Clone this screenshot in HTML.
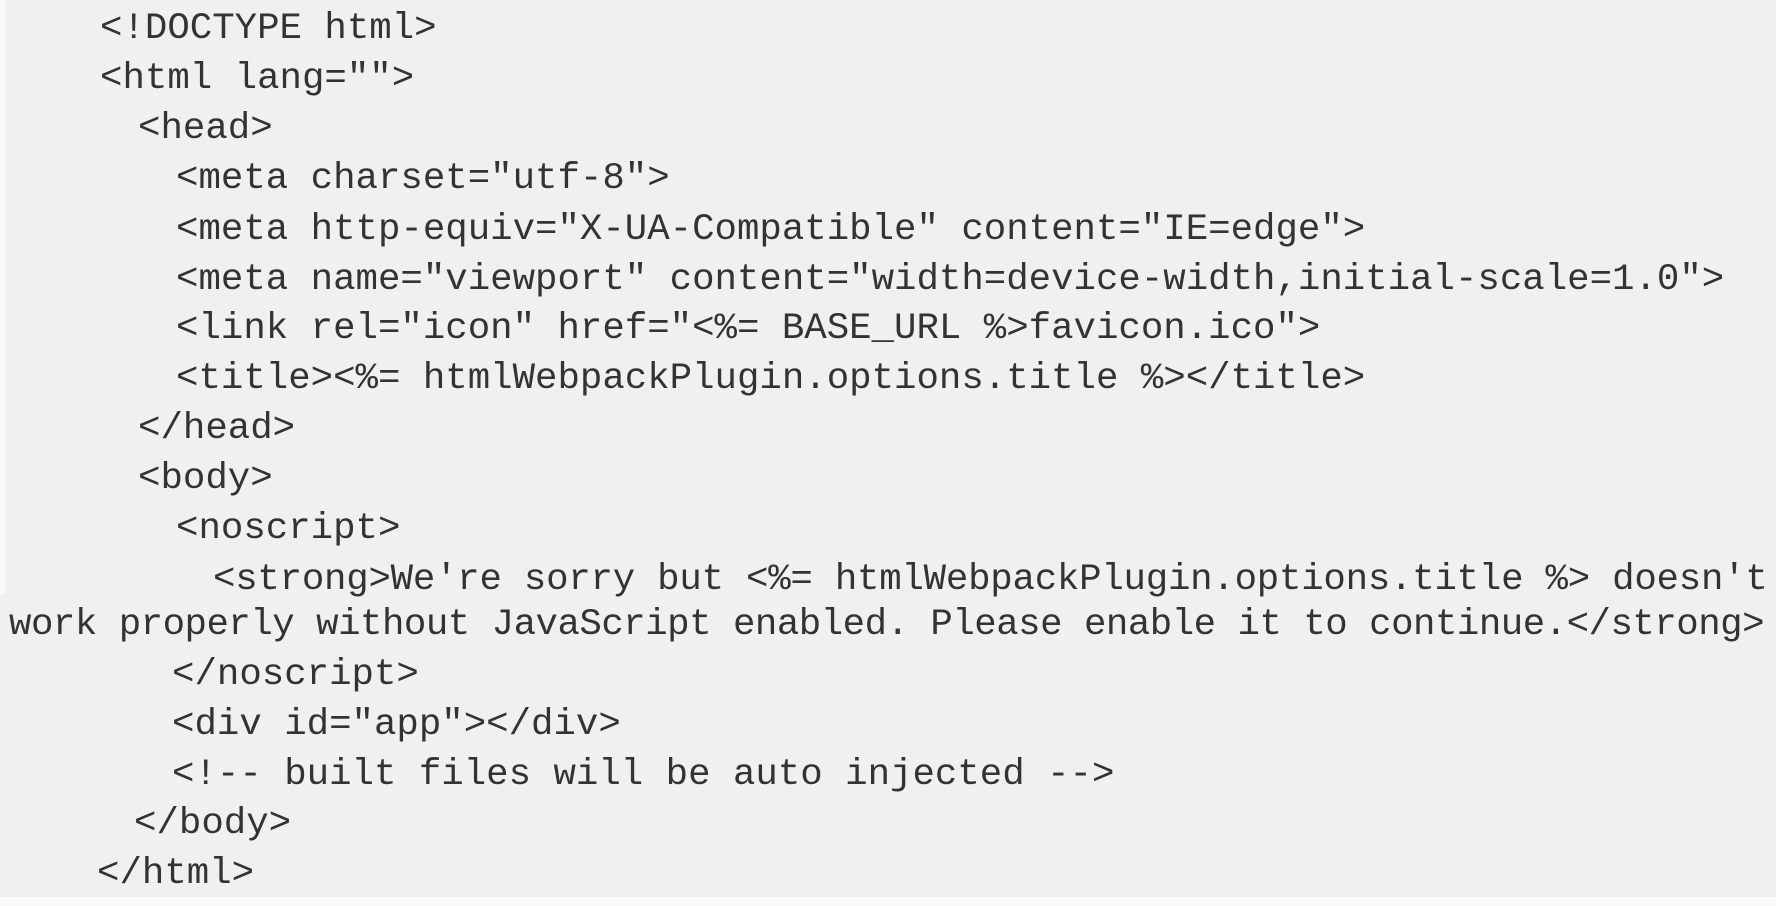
<!DOCTYPE html>
<html><head><meta charset="utf-8"><style>
html,body{margin:0;padding:0}
body{width:1776px;height:906px;background:#f0f0f0;position:relative;overflow:hidden;font-family:"Liberation Mono",monospace;font-size:37.4px;color:#333}
.l{position:absolute;white-space:pre;line-height:50px;height:50px;margin-top:2px}
.edge{position:absolute;left:0;top:0;width:5px;height:595px;background:#fafafa}
.bot{position:absolute;left:0;top:897px;width:1776px;height:9px;background:#fafafa}
</style></head><body>
<div class="edge"></div><div class="bot"></div>
<div class="l" style="left:100px;top:2px">&lt;!DOCTYPE html&gt;</div>
<div class="l" style="left:100px;top:52px">&lt;html lang=""&gt;</div>
<div class="l" style="left:138px;top:102px">&lt;head&gt;</div>
<div class="l" style="left:176px;top:152px">&lt;meta charset="utf-8"&gt;</div>
<div class="l" style="left:176px;top:203px">&lt;meta http-equiv="X-UA-Compatible" content="IE=edge"&gt;</div>
<div class="l" style="left:176px;top:253px">&lt;meta name="viewport" content="width=device-width,initial-scale=1.0"&gt;</div>
<div class="l" style="left:176px;top:302px">&lt;link rel="icon" href="&lt;%= BASE_URL %&gt;favicon.ico"&gt;</div>
<div class="l" style="left:176px;top:352px">&lt;title&gt;&lt;%= htmlWebpackPlugin.options.title %&gt;&lt;/title&gt;</div>
<div class="l" style="left:138px;top:402px">&lt;/head&gt;</div>
<div class="l" style="left:138px;top:452px">&lt;body&gt;</div>
<div class="l" style="left:176px;top:502px">&lt;noscript&gt;</div>
<div class="l" style="left:213px;top:553px;letter-spacing:-0.23px">&lt;strong&gt;We're sorry but &lt;%= htmlWebpackPlugin.options.title %&gt; doesn't</div>
<div class="l" style="left:9px;top:598px;letter-spacing:-0.5px">work properly without JavaScript enabled. Please enable it to continue.&lt;/strong&gt;</div>
<div class="l" style="left:172px;top:648px">&lt;/noscript&gt;</div>
<div class="l" style="left:172px;top:698px">&lt;div id="app"&gt;&lt;/div&gt;</div>
<div class="l" style="left:172px;top:748px">&lt;!-- built files will be auto injected --&gt;</div>
<div class="l" style="left:134px;top:797px">&lt;/body&gt;</div>
<div class="l" style="left:97px;top:847px">&lt;/html&gt;</div>
</body></html>
